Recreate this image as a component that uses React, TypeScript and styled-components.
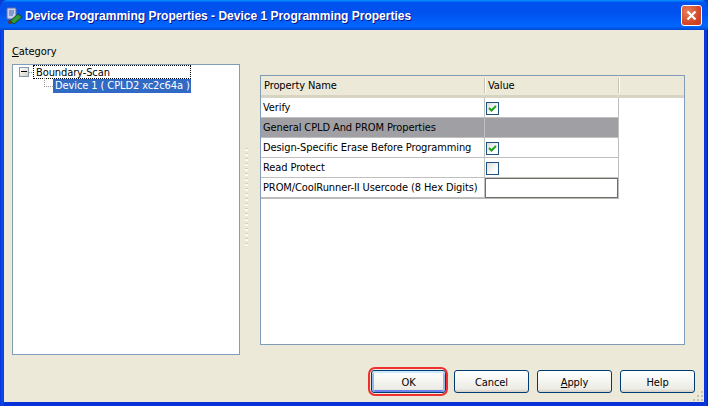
import React from "react";
import styled, { createGlobalStyle } from "styled-components";

const Global = createGlobalStyle`
  html, body { margin: 0; padding: 0; background: #0a3ad0; }
  * { box-sizing: border-box; }
`;

const Window = styled.div`
  width: 708px; height: 406px; display: flex; flex-direction: column; position: relative; overflow: hidden;
  font-family: "DejaVu Sans", sans-serif; font-stretch: condensed; font-size: 11px; letter-spacing: -0.1px; color: #000;
  background: linear-gradient(90deg, #0831d9 0, #0a4be8 2px, #0a4be8 3px, #0831d9 4px, #0831d9 704px, #0a3fe0 706px, #001ea0 708px);
  border-radius: 7px 7px 0 0;
`;
const TitleBar = styled.div`
  height: 30px; flex: none; display: flex; align-items: center; padding: 2px 6px 0 6px; gap: 3px;
  background: linear-gradient(180deg, #0997ff 0, #0053ee 8%, #0050ee 40%, #0066ff 88%, #0047d0 100%);
`;
const TitleText = styled.div`
  flex: 1; color: #fff; font: bold 12px "Liberation Sans", sans-serif; letter-spacing: 0; text-shadow: 1px 1px 0 #0f1089; white-space: nowrap;
`;
const CloseButton = styled.div`
  width: 21px; height: 21px; margin-top: -1px; border: 1px solid #fff; border-radius: 3px; display: flex; align-items: center; justify-content: center;
  background: radial-gradient(circle at 30% 30%, #e8805c, #d4482a 60%, #c23a1c);
`;
const Body = styled.div`
  flex: 1; margin: 0 4px 4px; background: #ece9d8; display: flex; flex-direction: column; position: relative;
`;
const Panels = styled.div`
  display: flex; padding: 14px 19px 0 8px; height: 325px;
`;
const LeftColumn = styled.div`
  width: 228px; display: flex; flex-direction: column; gap: 5px;
`;
const CategoryLabel = styled.div`
  height: 15px; line-height: 15px; u { text-decoration: underline; }
`;
const TreeBox = styled.div`
  height: 291px; background: #fff; border: 1px solid #7f9db9; padding: 0 0 0 6px;
`;
const TreeRow = styled.div`
  display: flex; align-items: center; height: 14px;
`;
const Expander = styled.div`
  width: 10px; height: 10px; border: 1px solid #8299b4; background: linear-gradient(135deg, #fff, #d4d0c0); position: relative; flex: none;
  &::after { content: ""; position: absolute; left: 1px; top: 3px; width: 6px; height: 1px; background: #000; }
`;
const DotH = styled.div<{ $w: number }>`
  width: ${(p) => p.$w}px; height: 1px; flex: none;
  background: repeating-linear-gradient(90deg, #999 0 1px, transparent 1px 2px);
`;
const RootLabel = styled.div`
  width: 158px; height: 14px; line-height: 14px; padding-left: 2px; border: 1px dotted #000; white-space: nowrap;
`;
const ChildRow = styled.div`
  display: flex; align-items: center; height: 14px; margin-left: 25px; position: relative;
  &::before { content: ""; position: absolute; left: 0; top: -1px; height: 8px; width: 1px;
    background: repeating-linear-gradient(180deg, #999 0 1px, transparent 1px 2px); }
`;
const ChildLabel = styled.div`
  width: 138px; height: 14px; line-height: 13px; background: #316ac5; color: #fff; padding-left: 2px; white-space: nowrap;
`;
const Splitter = styled.div`
  width: 20px; display: flex; padding: 104px 0 0 5px;
`;
const Grip = styled.div`
  width: 3px; height: 100px;
  background: repeating-linear-gradient(180deg, #d4d0c0 0 1px, #fafaf5 1px 3px, transparent 3px 5px);
`;
const RightPanel = styled.div`
  width: 425px; height: 270px; margin-top: 31px; background: #fff; border: 1px solid #7f9db9;
  align-self: flex-start;
`;
const HeaderRow = styled.div`
  display: grid; grid-template-columns: 224px 134px 1fr; height: 22px; background: #ece9d8; border-bottom: 3px solid #d8d4c4;
`;
const HeaderCell = styled.div`
  line-height: 20px; padding-left: 3px; position: relative;
  &::after { content: ""; position: absolute; right: 0; top: 2px; height: 15px; width: 1px; background: #c8c4b4; box-shadow: 1px 0 0 #fff; }
  &:last-child::after { display: none; }
`;
const Table = styled.div`
  width: 358px; border-bottom: 1px solid #b8b8b8;
`;
const Row = styled.div<{ $group?: boolean }>`
  display: grid; grid-template-columns: 224px 134px; height: 20px;
  border-bottom: 1px solid #c0c0c0;
  background: ${(p) => (p.$group ? "#a0a0a4" : "#fff")};
`;
const NameCell = styled.div`
  border-right: 1px solid #c0c0c0; padding-left: 2px; line-height: 20px; white-space: nowrap;
`;
const ValueCell = styled.div`
  border-right: 1px solid #c0c0c0; padding-left: 1px; display: flex; align-items: center;
`;
const CheckBox = styled.div`
  width: 13px; height: 13px; border: 1px solid #1c5180; background: linear-gradient(135deg, #dcdcd7, #fff 70%); display: flex; align-items: center; justify-content: center;
`;
const CodeInput = styled.div`
  width: 133px; height: 20px; margin-left: -1px; background: #fff; border: 1px solid #716f64;
`;
const Footer = styled.div`
  display: flex; justify-content: flex-end; gap: 8px; padding: 15px 9px 0 0;
`;
const Btn = styled.div<{ $def?: boolean }>`
  width: 75px; height: 23px; border: 1px solid #003c74; border-radius: 3px; text-align: center; line-height: 23px; position: relative;
  background: linear-gradient(180deg, #fff 0, #f4f4f0 50%, #ecebe5 85%, #d6d0c5 100%);
  box-shadow: ${(p) => (p.$def ? "inset 0 2px 0 #cee7ff, inset 2px 0 0 #98b8ea, inset -2px 0 0 #98b8ea, inset 0 -2px 0 #6982ee" : "none")};
  u { text-decoration: underline; }
`;
const Highlight = styled.div`
  position: absolute; left: -4px; top: -4px; width: 80px; height: 29px; border: 2px solid #f03030; border-radius: 7px; pointer-events: none;
`;
const ResizeGrip = styled.svg`
  position: absolute; right: 0; bottom: 0;
`;

const Check = () => (
  <svg width="11" height="11" viewBox="0 0 11 11">
    <path d="M2 5 L4.5 7.5 L9 3" fill="none" stroke="#21a121" strokeWidth="2" />
  </svg>
);

export default function App() {
  return (
    <Window>
      <Global />
      <TitleBar>
        <svg width="16" height="18" viewBox="0 0 16 18">
          <rect x="1" y="1" width="9" height="11" rx="1" fill="#c8d0e8" stroke="#6070a8" />
          <path d="M3 4h5M3 6h5M3 8h4" stroke="#4060c0" />
          <path d="M4 14 L12 7 L16 10 L8 17 Z" fill="#2f9a3a" stroke="#174a20" />
          <circle cx="4" cy="15" r="2" fill="#5a3a20" />
        </svg>
        <TitleText>Device Programming Properties - Device 1 Programming Properties</TitleText>
        <CloseButton>
          <svg width="11" height="11" viewBox="0 0 11 11">
            <path d="M1.5 1.5 L9.5 9.5 M9.5 1.5 L1.5 9.5" stroke="#fff" strokeWidth="2.2" />
          </svg>
        </CloseButton>
      </TitleBar>
      <Body>
        <Panels>
          <LeftColumn>
            <CategoryLabel><u>C</u>ategory</CategoryLabel>
            <TreeBox>
              <TreeRow>
                <Expander />
                <DotH $w={4} />
                <RootLabel>Boundary-Scan</RootLabel>
              </TreeRow>
              <ChildRow>
                <DotH $w={9} />
                <ChildLabel>Device 1 ( CPLD2 xc2c64a )</ChildLabel>
              </ChildRow>
            </TreeBox>
          </LeftColumn>
          <Splitter><Grip /></Splitter>
          <RightPanel>
            <HeaderRow>
              <HeaderCell>Property Name</HeaderCell>
              <HeaderCell>Value</HeaderCell>
              <HeaderCell />
            </HeaderRow>
            <Table>
              <Row><NameCell>Verify</NameCell><ValueCell><CheckBox><Check /></CheckBox></ValueCell></Row>
              <Row $group><NameCell>General CPLD And PROM Properties</NameCell><ValueCell /></Row>
              <Row><NameCell>Design-Specific Erase Before Programming</NameCell><ValueCell><CheckBox><Check /></CheckBox></ValueCell></Row>
              <Row><NameCell>Read Protect</NameCell><ValueCell><CheckBox /></ValueCell></Row>
              <Row><NameCell>PROM/CoolRunner-II Usercode (8 Hex Digits)</NameCell><ValueCell><CodeInput /></ValueCell></Row>
            </Table>
          </RightPanel>
        </Panels>
        <Footer>
          <Btn $def>OK<Highlight /></Btn>
          <Btn>Cancel</Btn>
          <Btn><u>A</u>pply</Btn>
          <Btn>Help</Btn>
        </Footer>
        <ResizeGrip width="12" height="12" viewBox="0 0 12 12">
          <path d="M9 1h2v2H9zM5 5h2v2H5zM9 5h2v2H9zM1 9h2v2H1zM5 9h2v2H5zM9 9h2v2H9z" fill="#c4c0b0" />
        </ResizeGrip>
      </Body>
    </Window>
  );
}
